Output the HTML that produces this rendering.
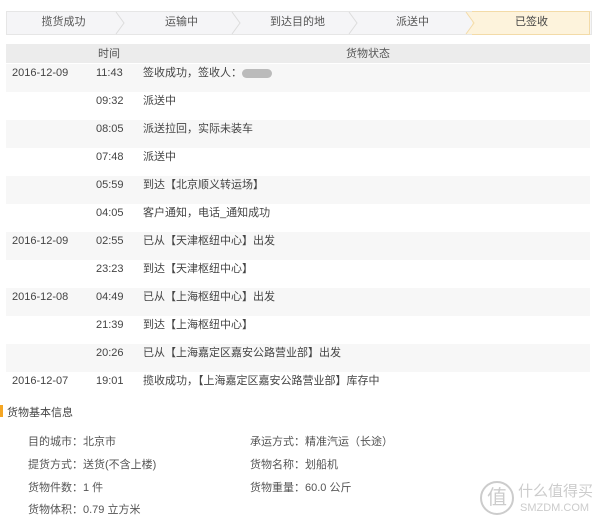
<!DOCTYPE html>
<html><head><meta charset="utf-8"><style>
body{margin:0;width:600px;height:523px;background:#fff;font-family:"Liberation Sans","Noto Sans CJK SC",sans-serif;font-size:11px;color:#444;position:relative;overflow:hidden}
.step{position:absolute;top:11px;height:23px;line-height:23px;text-align:center;color:#555}
.bar{position:absolute;left:6px;top:11px;width:584px;height:22px;background:#f5f5f7;border:1px solid #e6e6e6}
.row{position:absolute;left:6px;width:584px;height:28px;line-height:18px}
.row span{position:absolute;top:0}
.g{background:#f7f7f7}
.d{left:6px}.t{left:90px}.s{left:137px}
.i{position:absolute;font-size:11px;color:#555}
</style></head><body>
<div class="bar"></div>
<div style="position:absolute;left:472px;top:11px;width:117px;height:22px;background:#fdf3dc;border:1px solid #f3dba8;border-left:none"></div>
<svg style="position:absolute;left:0;top:11px" width="600" height="24">
<g fill="none" stroke="#dcdcdc" stroke-width="1">
<polyline points="116,1 124,12 116,23"/><polyline points="232,1 240,12 232,23"/><polyline points="349,1 357,12 349,23"/>
</g>
<polygon points="466,1 474,12 466,23 473,23 473,1" fill="#fdf3dc"/>
<polyline points="466,1 474,12 466,23" fill="none" stroke="#f3dba8"/>
</svg>
<div class="step" style="left:6px;width:115px">揽货成功</div>
<div class="step" style="left:124px;width:115px">运输中</div>
<div class="step" style="left:240px;width:115px">到达目的地</div>
<div class="step" style="left:355px;width:115px">派送中</div>
<div class="step" style="left:474px;width:115px;color:#444">已签收</div>
<div style="position:absolute;left:6px;top:44px;width:584px;height:19px;background:#ececec"></div>
<div class="i" style="left:98px;top:45px">时间</div>
<div class="i" style="left:346px;top:45px">货物状态</div>
<div class="row g" style="top:64px;height:28px"><span class="d">2016-12-09</span><span class="t">11:43</span><span class="s">签收成功，签收人：<b style="display:inline-block;width:30px;height:9px;background:#bbb;border-radius:5px;vertical-align:middle"></b></span></div>
<div class="row" style="top:92px"><span class="t">09:32</span><span class="s">派送中</span></div>
<div class="row g" style="top:120px"><span class="t">08:05</span><span class="s">派送拉回，实际未装车</span></div>
<div class="row" style="top:148px"><span class="t">07:48</span><span class="s">派送中</span></div>
<div class="row g" style="top:176px"><span class="t">05:59</span><span class="s">到达【北京顺义转运场】</span></div>
<div class="row" style="top:204px"><span class="t">04:05</span><span class="s">客户通知，电话_通知成功</span></div>
<div class="row g" style="top:232px"><span class="d">2016-12-09</span><span class="t">02:55</span><span class="s">已从【天津枢纽中心】出发</span></div>
<div class="row" style="top:260px"><span class="t">23:23</span><span class="s">到达【天津枢纽中心】</span></div>
<div class="row g" style="top:288px"><span class="d">2016-12-08</span><span class="t">04:49</span><span class="s">已从【上海枢纽中心】出发</span></div>
<div class="row" style="top:316px"><span class="t">21:39</span><span class="s">到达【上海枢纽中心】</span></div>
<div class="row g" style="top:344px"><span class="t">20:26</span><span class="s">已从【上海嘉定区嘉安公路营业部】出发</span></div>
<div class="row" style="top:372px"><span class="d">2016-12-07</span><span class="t">19:01</span><span class="s">揽收成功，【上海嘉定区嘉安公路营业部】库存中</span></div>
<div style="position:absolute;left:0;top:405px;width:3px;height:12px;background:#f5a623"></div>
<div class="i" style="left:7px;top:404px;color:#444">货物基本信息</div>
<div class="i" style="left:28px;top:433px">目的城市：北京市</div>
<div class="i" style="left:250px;top:433px">承运方式：精准汽运（长途）</div>
<div class="i" style="left:28px;top:456px">提货方式：送货(不含上楼)</div>
<div class="i" style="left:250px;top:456px">货物名称：划船机</div>
<div class="i" style="left:28px;top:479px">货物件数：1 件</div>
<div class="i" style="left:250px;top:479px">货物重量：60.0 公斤</div>
<div class="i" style="left:28px;top:501px">货物体积：0.79 立方米</div>
<div style="position:absolute;left:480px;top:481px;width:30px;height:30px;border:2px solid #ccc;border-radius:50%;color:#ccc;font-size:20px;line-height:30px;text-align:center">值</div>
<div style="position:absolute;left:518px;top:480px;color:#ccc;font-size:15px;white-space:nowrap">什么值得买</div>
<div style="position:absolute;left:520px;top:502px;color:#ccc;font-size:11px;white-space:nowrap">SMZDM.COM</div>
</body></html>
